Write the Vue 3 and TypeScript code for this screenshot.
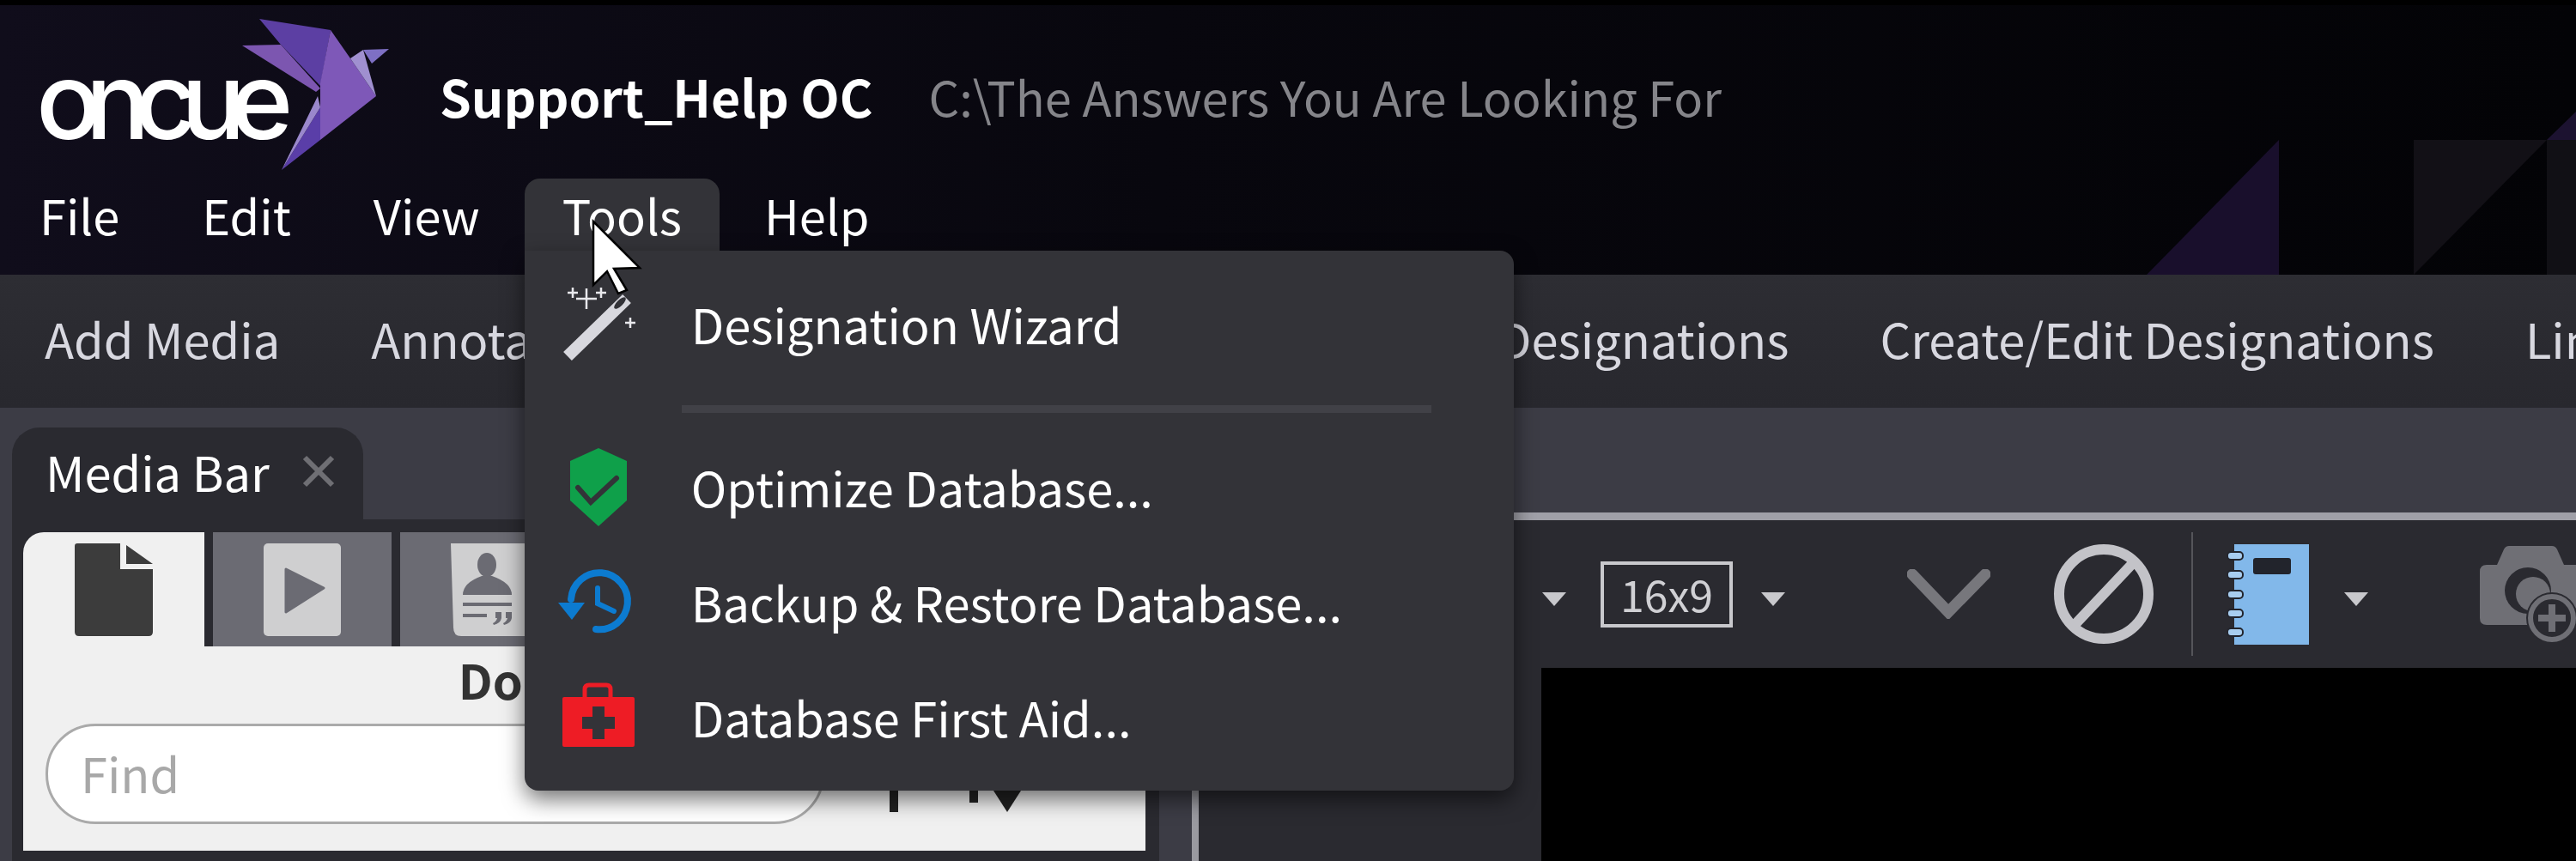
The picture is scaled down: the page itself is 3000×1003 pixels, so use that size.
<script setup lang="ts">
const menus = ["File", "Edit", "View", "Tools", "Help"];
const tools = ["Add Media", "Annotate Transcript", "Search Transcript", "Play Designations", "Create/Edit Designations", "Link Designations"];
</script>

<template>
  <div class="app">
    <header class="header">
      <svg class="bg-shapes" viewBox="0 0 600 190" width="600" height="190">
        <polygon points="254,33 254,190 100,190" fill="#190f2c" />
        <polygon points="411,33 566,33 411,190" fill="#121016" />
        <polygon points="566,33 600,33 600,190 566,190" fill="#111015" />
        <polygon points="566,33 600,0 600,33" fill="#1c1230" />
      </svg>
      <div class="title-row">
        <div class="logo">
          <span class="logo-text">oncue</span>
          <svg class="bird" viewBox="0 0 180 190" width="180" height="190">
            <polygon points="22,2 105,15 93,80 47,32" fill="#5c3fa3" />
            <polygon points="2,33 47,32 93,83 88,87" fill="#7c56b0" />
            <polygon points="105,15 128,48 158,92 93,143 93,77" fill="#7e58b8" />
            <polygon points="128,48 143,38 158,92" fill="#a090d0" />
            <polygon points="143,38 173,37 153,54" fill="#7e70c4" />
            <polygon points="93,105 93,143 48,178" fill="#5a3ea8" />
            <polygon points="90,92 93,105 48,178 73,127" fill="#9a88cc" />
          </svg>
        </div>
        <span class="project">Support_Help OC</span>
        <span class="path">C:\The Answers You Are Looking For</span>
      </div>
      <nav class="menu-bar">
        <div v-for="m in menus" :key="m" class="menu-item" :class="{ open: m === 'Tools' }">
          {{ m }}
          <div v-if="m === 'Tools'" class="dropdown">
            <div class="row">
              <svg class="row-icon" viewBox="0 0 130 130" width="130" height="130">
                <line x1="29" y1="100" x2="98" y2="33" stroke="#d8d8de" stroke-width="14" />
                <ellipse cx="90" cy="38" rx="9" ry="3.5" transform="rotate(-45 90 38)" fill="#333338" />
                <path d="M51 21V45M39 33H63M35 20V32M29 26H41M68 20V32M62 26H74M102 55V67M96 61H108" stroke="#e8e8ec" stroke-width="2.5" />
              </svg>
              <span class="first-label">Designation Wizard</span>
            </div>
            <div class="sep"></div>
            <div class="row">
              <svg class="row-icon" viewBox="0 0 130 130" width="130" height="130">
                <polygon points="65,20 98,35 98,81 65,111 32,81 32,35" fill="#0fa04a" />
                <polyline points="41,66 56,83 86,55" fill="none" stroke="#333338" stroke-width="6" stroke-linecap="round" />
              </svg>
              <span>Optimize Database...</span>
            </div>
            <div class="row">
              <svg class="row-icon" viewBox="0 0 130 130" width="130" height="130">
                <path d="M62 97A33 33 0 1 0 33 62" fill="none" stroke="#0c7bd0" stroke-width="8" stroke-linecap="round" />
                <polygon points="18,66 49,66 34,86" fill="#0c7bd0" />
                <polyline points="64,49 64,67 83,76" fill="none" stroke="#0c7bd0" stroke-width="6" stroke-linecap="round" />
              </svg>
              <span>Backup &amp; Restore Database...</span>
            </div>
            <div class="row">
              <svg class="row-icon" viewBox="0 0 130 130" width="130" height="130">
                <path d="M49 44V33Q49 28 54 28H74Q79 28 79 33V44" fill="none" stroke="#ee1c25" stroke-width="5" />
                <rect x="23" y="42" width="84" height="58" rx="2" fill="#ee1c25" />
                <path d="M58 53H72V65H84V79H72V91H58V79H46V65H58Z" fill="#333338" />
              </svg>
              <span>Database First Aid...</span>
            </div>
          </div>
        </div>
      </nav>
    </header>

    <div class="toolbar">
      <span v-for="t in tools" :key="t" class="tool">{{ t }}</span>
    </div>

    <main class="workspace">
      <section class="left">
        <div class="dock-tab">
          <span>Media Bar</span>
          <svg viewBox="0 0 38 38" width="38" height="38"><path d="M3 3L35 35M35 3L3 35" stroke="#6f6f74" stroke-width="6" /></svg>
        </div>
        <div class="panel">
          <div class="media-tabs">
            <div class="media-tab active">
              <svg viewBox="0 0 91 108" width="91" height="108">
                <path d="M3 0H53V30H91V103Q91 108 86 108H5Q0 108 0 103V3Q0 0 3 0Z" fill="#3c3c3c" />
                <path d="M60 2L91 24H60Z" fill="#3c3c3c" />
              </svg>
            </div>
            <div class="media-tab">
              <svg viewBox="0 0 90 108" width="90" height="108">
                <rect width="90" height="108" rx="5" fill="#cfcfd0" />
                <path d="M26 30L70 52L26 80Z" fill="#6b6b73" stroke="#6b6b73" stroke-width="3" stroke-linejoin="round" />
              </svg>
            </div>
            <div class="media-tab">
              <svg viewBox="0 0 90 108" width="90" height="108">
                <path d="M0 0H85Q90 0 90 5V108H12Q3 108 3 98Z" fill="#cfcfd0" />
                <ellipse cx="42" cy="25" rx="11" ry="14" fill="#6b6b73" />
                <path d="M14 60Q14 46 36 38H48Q71 46 71 60Z" fill="#6b6b73" />
                <path d="M14 71H71M14 84H42" stroke="#6b6b73" stroke-width="4" />
                <path d="M52 80H59V87Q58 93 50 95L49 93Q53 91 54 87H52ZM64 80H71V87Q70 93 62 95L61 93Q65 91 66 87H64Z" fill="#6b6b73" />
              </svg>
            </div>
            <div class="media-tab"></div>
          </div>
          <div class="media-body">
            <div class="media-heading">Documents</div>
            <div class="find-row">
              <div class="find">Find</div>
              <svg class="sort" viewBox="0 0 160 110" width="160" height="110">
                <rect x="0" y="0" width="10" height="103" fill="#222" />
                <rect x="93" y="0" width="10" height="92" fill="#222" />
                <polygon points="121,78 153,78 137,103" fill="#222" />
              </svg>
            </div>
          </div>
        </div>
      </section>

      <div class="splitter"></div>

      <section class="right">
        <div class="player-bar">
          <svg class="caret" viewBox="0 0 28 16" width="28" height="16"><polygon points="0,0 28,0 14,16" fill="#c8c8cc" /></svg>
          <div class="ratio">16x9</div>
          <svg class="caret after-ratio" viewBox="0 0 28 16" width="28" height="16"><polygon points="0,0 28,0 14,16" fill="#c8c8cc" /></svg>
          <svg class="chevron" viewBox="0 0 97 58" width="97" height="58">
            <polyline points="6,6 48,50 91,6" fill="none" stroke="#77777c" stroke-width="13" stroke-linecap="round" />
          </svg>
          <svg class="no" viewBox="0 0 116 116" width="116" height="116">
            <circle cx="58" cy="58" r="52" fill="none" stroke="#c3c3c8" stroke-width="12" />
            <line x1="92" y1="22" x2="24" y2="94" stroke="#c3c3c8" stroke-width="12" />
          </svg>
          <div class="divider"></div>
          <svg class="notebook" viewBox="0 0 95 117" width="95" height="117">
            <rect x="8" y="0" width="87" height="117" fill="#82b8ea" />
            <rect x="30" y="16" width="44" height="19" rx="3" fill="#22242c" />
            <g fill="#a8cdef" stroke="#22242c" stroke-width="2">
              <rect x="0" y="9" width="18" height="9" rx="4" />
              <rect x="0" y="31" width="18" height="9" rx="4" />
              <rect x="0" y="54" width="18" height="9" rx="4" />
              <rect x="0" y="76" width="18" height="9" rx="4" />
              <rect x="0" y="98" width="18" height="9" rx="4" />
            </g>
          </svg>
          <svg class="caret after-note" viewBox="0 0 28 16" width="28" height="16"><polygon points="0,0 28,0 14,16" fill="#c8c8cc" /></svg>
          <svg class="camera" viewBox="0 0 120 112" width="120" height="112">
            <path d="M8 22H20L28 4Q30 0 34 0H84Q88 0 90 4L98 22H120V92H8Q0 92 0 84V30Q0 22 8 22Z" fill="#6f6f75" />
            <circle cx="56" cy="52" r="27" fill="#2a2a30" />
            <circle cx="62" cy="56" r="20" fill="#6f6f75" />
            <circle cx="84" cy="84" r="30" fill="#2a2a30" />
            <circle cx="84" cy="84" r="25" fill="none" stroke="#6f6f75" stroke-width="6" />
            <path d="M84 68V100M68 84H100" stroke="#6f6f75" stroke-width="8" />
          </svg>
        </div>
        <div class="viewer">
          <div class="video"></div>
        </div>
      </section>
    </main>

    <svg class="cursor" viewBox="0 0 80 100" width="80" height="100">
      <polygon points="11,8 65,62 35,63 50,88 40,92 27,66 11,82" fill="#fff" stroke="#000" stroke-width="2.5" />
    </svg>
  </div>
</template>

<style>
html,
body {
  margin: 0;
  background: #000;
}
</style>

<style scoped>
.app {
  position: relative;
  width: 3000px;
  height: 1003px;
  overflow: hidden;
  display: flex;
  flex-direction: column;
  font-family: "Noto Sans CJK SC", "Noto Sans", sans-serif;
  font-size: 56px;
  color: #fff;
  background: #2a2a30;
}

.header {
  position: relative;
  height: 314px;
  flex: none;
  border-top: 6px solid #000;
  background: linear-gradient(90deg, #100d1b 0%, #08070e 45%, #030306 100%);
}

.bg-shapes {
  position: absolute;
  left: 2400px;
  top: 124px;
}

.title-row {
  position: relative;
  display: flex;
  align-items: center;
  height: 202px;
  padding-top: 8px;
  box-sizing: border-box;
}

.logo {
  position: relative;
  width: 512px;
  height: 194px;
  flex: none;
}

.logo-text {
  position: absolute;
  left: 42px;
  top: 28px;
  font-family: Inter, sans-serif;
  font-size: 125px;
  line-height: 150px;
  font-weight: 500;
  letter-spacing: -18px;
  color: #fff;
}

.bird {
  position: absolute;
  left: 280px;
  top: 6px;
}

.project {
  font-size: 59px;
  font-weight: 700;
  white-space: nowrap;
}

.path {
  margin-left: 65px;
  color: #85858a;
  white-space: nowrap;
}

.menu-bar {
  position: relative;
  display: flex;
  gap: 8px;
  padding-left: 2px;
}

.menu-item {
  position: relative;
  height: 84px;
  line-height: 84px;
  padding: 0 44px;
  border-radius: 18px 18px 0 0;
}

.menu-item.open {
  background: #333338;
  z-index: 5;
}

.dropdown {
  position: absolute;
  left: 0;
  top: 84px;
  width: 1152px;
  box-sizing: border-box;
  padding: 21px 0 19px;
  background: #333338;
  border-radius: 0 16px 16px 16px;
  box-shadow: 0 10px 26px rgba(0, 0, 0, 0.55);
}

.row {
  display: flex;
  align-items: center;
  height: 134px;
  padding-left: 21px;
  white-space: nowrap;
}

.row-icon {
  flex: none;
  margin-right: 43px;
}

.first-label {
  margin-bottom: 6px;
}

.sep {
  height: 9px;
  margin: 25px 96px 19px 183px;
  background: #414147;
}

.toolbar {
  flex: none;
  height: 155px;
  display: flex;
  align-items: center;
  gap: 106px;
  padding-left: 52px;
  padding-bottom: 8px;
  box-sizing: border-box;
  color: #d8d8e0;
  white-space: nowrap;
  background: linear-gradient(180deg, #2d2d33, #28282e);
}

.tool:nth-child(3) {
  margin-left: 9px;
}

.workspace {
  flex: 1;
  display: flex;
  min-height: 0;
  background: #3c3c45;
}

.left {
  flex: none;
  width: 1336px;
  margin-left: 14px;
  padding-top: 23px;
}

.dock-tab {
  display: flex;
  gap: 38px;
  align-items: center;
  width: 409px;
  height: 107px;
  box-sizing: border-box;
  padding: 0 0 6px 39px;
  background: #2a2a30;
  border-radius: 32px 32px 0 0;
}

.panel {
  height: 398px;
  box-sizing: border-box;
  padding: 15px 16px 12px 13px;
  background: #2a2a30;
}

.media-tabs {
  display: flex;
  gap: 10px;
  height: 133px;
}

.media-tab {
  width: 208px;
  display: flex;
  justify-content: center;
  padding-top: 13px;
  box-sizing: border-box;
  background: #6b6b73;
}

.media-tab.active {
  width: 211px;
  background: #f0f0f0;
  border-radius: 24px 0 0 0;
}

.media-body {
  height: 238px;
  background: #f0f0f0;
  color: #333;
}

.media-heading {
  text-align: center;
  font-weight: 700;
  height: 90px;
  line-height: 76px;
  padding-left: 20px;
}

.find-row {
  display: flex;
  padding-left: 26px;
}

.find {
  width: 907px;
  height: 117px;
  box-sizing: border-box;
  border: 3px solid #aaa;
  border-radius: 58px;
  padding-left: 38px;
  line-height: 108px;
  color: #a8a8a8;
  background: #fff;
}

.sort {
  flex: none;
  margin-left: 76px;
}

.splitter {
  width: 38px;
  flex: none;
}

.right {
  flex: 1;
  min-width: 0;
  margin-top: 122px;
  border-top: 9px solid #a0a0a8;
  border-left: 8px solid #9a9aa0;
  background: #2a2a30;
}

.player-bar {
  display: flex;
  align-items: center;
  height: 172px;
  padding-left: 400px;
}

.caret {
  flex: none;
  margin-top: 12px;
}

.ratio {
  flex: none;
  width: 154px;
  height: 77px;
  margin-left: 40px;
  box-sizing: border-box;
  border: 4px solid #c8c8cc;
  text-align: center;
  font-size: 50px;
  line-height: 66px;
  color: #d0d0d4;
}

.after-ratio {
  margin-left: 33px;
}

.chevron {
  flex: none;
  margin-left: 142px;
}

.no {
  flex: none;
  margin-left: 74px;
}

.divider {
  flex: none;
  width: 2px;
  height: 144px;
  margin-left: 44px;
  background: #55555a;
}

.notebook {
  flex: none;
  margin-left: 40px;
}

.after-note {
  margin-left: 41px;
}

.camera {
  flex: none;
  margin-left: 130px;
}

.viewer {
  height: 225px;
  padding-left: 399px;
}

.video {
  height: 100%;
  background: #000;
}

.cursor {
  position: absolute;
  left: 680px;
  top: 250px;
  z-index: 10;
}
</style>
